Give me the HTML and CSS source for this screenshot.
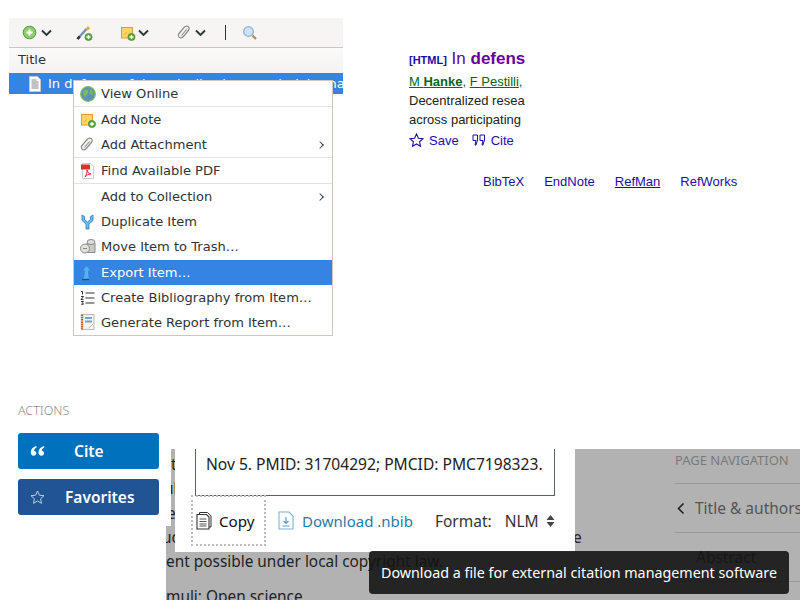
FILE: index.html
```html
<!DOCTYPE html>
<html lang="en">
<head>
<meta charset="utf-8">
<title>Citation collage</title>
<link rel="stylesheet" href="styles.css">
</head>
<body>
<svg class="defs" width="0" height="0" aria-hidden="true">
  <defs>
    <g id="plus-badge">
      <circle cx="0" cy="0" r="3.6" fill="#5aa83e" stroke="#3c7d2a" stroke-width=".6"/>
      <path d="M-2 0h4M0-2v4" stroke="#fff" stroke-width="1.3"/>
    </g>
    <g id="note">
      <rect x="1.5" y="2.5" width="11" height="10.5" fill="#fbd568" stroke="#e09a3e"/>
      <path d="M4 10l3-3M8 11l3-3" stroke="#e0a04a" stroke-width=".8"/>
    </g>
    <g id="clip">
      <path d="M2.500 12.500c-1.500-1.200-1.500-2.800-.5-4l5-6c1.400-1.600 3-1.800 4.200-.9 1.300 1 1.300 2.600.2 3.900l-5 6c-1 1.100-2.200 1.900-3.900 1z" fill="#f2f2f0" stroke="#8c8c88" stroke-width="1.200"/>
      <path d="M4.500 10.500l5-6" fill="none" stroke="#8c8c88" stroke-width="1.100"/>
    </g>
    <g id="chev">
      <path d="M1 1.500l4.500 4.500 4.500-4.500" fill="none" stroke="#2e3436" stroke-width="1.900"/>
    </g>
  </defs>
</svg>

<section class="pane zotero">
  <div class="z-toolbar">
    <svg class="z-ic i1" width="16" height="16" viewBox="0 0 16 16"><circle cx="7.500" cy="7.500" r="6.300" fill="#8fce6e" stroke="#4e9a33"/><path d="M4.500 7.500h6M7.500 4.500v6" stroke="#fff" stroke-width="2"/></svg>
    <svg class="z-chev c1" width="11" height="8" viewBox="0 0 11 8"><use href="#chev"/></svg>
    <svg class="z-ic i2" width="18" height="16" viewBox="0 0 18 16"><path d="M2.500 14l9-10" stroke="#7c93ad" stroke-width="2.600"/><path d="M2.500 14l2.200-2.500" stroke="#2f3133" stroke-width="2.600"/><path d="M13 .5l.8 2 2 .8-2 .8-.8 2-.8-2-2-.8 2-.8z" fill="#e8a020"/><use href="#plus-badge" x="13.500" y="12"/></svg>
    <svg class="z-ic i3" width="16" height="16" viewBox="0 0 16 16"><use href="#note"/><use href="#plus-badge" x="11.500" y="12"/></svg>
    <svg class="z-chev c2" width="11" height="8" viewBox="0 0 11 8"><use href="#chev"/></svg>
    <svg class="z-ic i4" width="15" height="15" viewBox="0 0 15 15"><use href="#clip"/></svg>
    <svg class="z-chev c3" width="11" height="8" viewBox="0 0 11 8"><use href="#chev"/></svg>
    <span class="z-sep"></span>
    <svg class="z-ic i5" width="16" height="16" viewBox="0 0 16 16"><circle cx="6.500" cy="6.500" r="4.800" fill="#cfe3f7" stroke="#8fb2d4" stroke-width="1.300"/><path d="M10.500 10.500l3.500 3.500" stroke="#b8875a" stroke-width="2.200"/></svg>
  </div>
  <div class="z-header">Title</div>
  <div class="z-row">
    <svg class="z-doc" width="14" height="16" viewBox="0 0 14 16"><path d="M1.500.5h8l3 3v12h-11z" fill="#fff" stroke="#c8c8c8"/><path d="M3.500 4h5M3.500 6h7M3.500 8h7M3.500 10h7M3.500 12h7" stroke="#777" stroke-width=".9"/></svg>
    <span class="z-title">In defense of decentralized research data management</span>
  </div>
</section>

<nav class="pane menu">
  <div class="m-item m-first"><span class="m-icon"><svg width="16" height="16" viewBox="0 0 16 16"><circle cx="8" cy="8" r="7.300" fill="#5b93b8" stroke="#7dbb5c" stroke-width="1.300"/><path d="M3 6c2-3 4-3 5-1s-1 3-2 5-3-1-3-4zM10 3c2 1 3 3 3 5l-2 1-1-3z" fill="#7db865"/></svg></span>View Online</div>
  <div class="m-sep"></div>
  <div class="m-item"><span class="m-icon"><svg width="16" height="16" viewBox="0 0 16 16"><use href="#note"/><use href="#plus-badge" x="12" y="12"/></svg></span>Add Note</div>
  <div class="m-item m-sub"><span class="m-icon"><svg width="15" height="15" viewBox="0 0 15 15"><use href="#clip"/></svg></span>Add Attachment<span class="m-arrow"></span></div>
  <div class="m-sep"></div>
  <div class="m-item"><span class="m-icon"><svg width="15" height="16" viewBox="0 0 15 16"><path d="M2.500.5h8l3 3v12h-11z" fill="#fff" stroke="#ccc"/><rect x="1" y="1.500" width="9" height="5" fill="#d8302a"/><path d="M5 14c2-3 2-5 2-7 1 3 2 4 4 4-3 0-4 1-6 3z" fill="none" stroke="#d8302a"/></svg></span>Find Available PDF</div>
  <div class="m-sep"></div>
  <div class="m-item m-sub"><span class="m-icon"></span>Add to Collection<span class="m-arrow"></span></div>
  <div class="m-item"><span class="m-icon"><svg width="15" height="16" viewBox="0 0 15 16"><path d="M2 1l2.500 1.500v3L7.500 8l3-2.500v-3L13 1v5.500L9 10v5H6v-5L2 6.500z" fill="#6cbcf0" stroke="#2b7cc0" stroke-width=".8"/></svg></span>Duplicate Item</div>
  <div class="m-item m-tall"><span class="m-icon"><svg width="16" height="16" viewBox="0 0 16 16"><path d="M7 5h8v9.500H7z" fill="#c9c9c6" stroke="#8a8a86"/><ellipse cx="11" cy="4" rx="4" ry="2.500" fill="#ddd" stroke="#8a8a86"/><circle cx="5" cy="10.500" r="4.500" fill="#e2e2df" stroke="#8a8a86"/><path d="M3 10.500h4" stroke="#888"/></svg></span>Move Item to Trash…</div>
  <div class="m-item m-active"><span class="m-icon"><svg width="12" height="16" viewBox="0 0 12 16"><path d="M6.500 1L10 5.500H8c0 3 .3 5.500 1 8.500H3c1.500-2.500 2-5.500 2-8.500H3z" fill="#52b4ee"/><path d="M2 14.500h7" stroke="#174f8c" stroke-width="1.400"/></svg></span>Export Item…</div>
  <div class="m-item"><span class="m-icon"><svg width="15" height="14" viewBox="0 0 15 14"><path d="M5.500 2h9M5.500 7h9M5.500 12h9" stroke="#333" stroke-width="1.200"/><path d="M1 .5h1.500v3M1 5.500h2.500L1 8.500h2.500M1 10.500h2.500l-1 1.200 1 1.500H1" fill="none" stroke="#333"/></svg></span>Create Bibliography from Item…</div>
  <div class="m-item m-last"><span class="m-icon"><svg width="15" height="16" viewBox="0 0 15 16"><rect x="2" y=".5" width="12" height="15" fill="#f5f3ea" stroke="#bbb"/><path d="M2 .5v15" stroke="#c65a2e" stroke-width="2.400" stroke-dasharray="1.500 .8"/><rect x="5" y="3" width="7" height="2" fill="#7a9fd0"/><rect x="5" y="6.500" width="7" height="2" fill="#7a9fd0"/><path d="M9 14l4-4" stroke="#bbb"/></svg></span>Generate Report from Item…</div>
</nav>

<section class="pane scholar">
  <div class="s-title"><span class="s-tag">[HTML]</span> <span class="s-link">In <b>defens</b></span></div>
  <div class="s-authors"><span class="s-u">M <b>Hanke</b></span>, <span class="s-u">F Pestilli</span>,</div>
  <div class="s-body">Decentralized resea</div>
  <div class="s-body">across participating</div>
  <div class="s-actions">
    <svg width="15" height="14" viewBox="0 0 15 14"><path d="M7.500 1l1.900 4.200 4.600.5-3.400 3.100.9 4.500-4-2.300-4 2.300.9-4.500L1 5.700l4.600-.5z" fill="none" stroke="#1a0dab" stroke-width="1.100"/></svg>
    <span class="s-act">Save</span>
    <svg class="s-q" width="14" height="12" viewBox="0 0 14 12"><path d="M1 1h4.500v5L4 11H3l1-4.500H1zM8 1h4.500v5L11 11h-1l1-4.500H8z" fill="none" stroke="#1a0dab"/></svg>
    <span class="s-act">Cite</span>
  </div>
</section>

<section class="pane exports">
  <span>BibTeX</span><span>EndNote</span><span class="s-under">RefMan</span><span>RefWorks</span>
</section>

<section class="pane actions">
  <div class="a-label">ACTIONS</div>
  <div class="a-btn a-cite"><svg class="a-ic" width="15" height="12" viewBox="0 0 15 12"><path d="M6.500 1C3 2 .8 4 .8 7.300c0 2 1.200 3.400 2.900 3.400 1.500 0 2.600-1.100 2.600-2.500S5.300 5.800 4 5.800c0-1.400 1-2.600 2.500-3.300zM14.200 1c-3.500 1-5.700 3-5.700 6.300 0 2 1.200 3.400 2.900 3.400 1.500 0 2.600-1.100 2.600-2.500S13 5.800 11.700 5.800c0-1.400 1-2.600 2.500-3.300z" fill="#fff"/></svg><span class="a-text">Cite</span></div>
  <div class="a-btn a-fav"><svg class="a-ic" width="15" height="14" viewBox="0 0 15 14"><path d="M7.500 1l1.900 4.200 4.600.5-3.400 3.100.9 4.500-4-2.300-4 2.300.9-4.500L1 5.700l4.600-.5z" fill="none" stroke="#cfdbe8" stroke-width=".9"/></svg><span class="a-text">Favorites</span></div>
</section>

<section class="pane dim">
  <div class="d-strip"></div>
  <div class="d-clip">
    <span class="d-f d-f1">t</span>
    <span class="d-f d-f2">ul</span>
    <span class="d-f d-f3">e</span>
  </div>
  <div class="d-l1">uc</div>
  <div class="d-l2">ent possible under local copyright law.</div>
  <div class="d-l3">muli: Open science</div>
  <span class="d-e">e</span>
  <aside class="d-nav">
    <div class="n-label">PAGE NAVIGATION</div>
    <div class="n-item n-back"><svg width="8" height="13" viewBox="0 0 8 13"><path d="M6.500 1.500l-5 5 5 5" fill="none" stroke="#222" stroke-width="1.600"/></svg>Title &amp; authors</div>
    <div class="n-item n-abs">Abstract</div>
    <div class="n-item"></div>
  </aside>
</section>

<section class="pane modal">
  <div class="c-box">Nov 5. PMID: 31704292; PMCID: PMC7198323.</div>
  <div class="c-bar">
    <div class="c-copy">
      <svg width="16" height="18" viewBox="0 0 16 18"><path d="M3.500 2.500v-2h8l3.500 3.500v11h-2" fill="none" stroke="#333"/><path d="M1 2.500h9.500l2.500 2.500v12H1z" fill="#fff" stroke="#333" stroke-width="1.100"/><path d="M3.500 7h7M3.500 9.500h7M3.500 12h7M3.500 14h7" stroke="#555" stroke-width="1.200"/></svg>
      <span>Copy</span>
    </div>
    <div class="c-dl">
      <svg width="16" height="19" viewBox="0 0 16 19"><path d="M1 1h10l4 4v13H1z" fill="#fff" stroke="#7fb2d0" stroke-width="1.100"/><path d="M8 6v6M5.500 10l2.500 2.500 2.500-2.500M4.500 15h7" fill="none" stroke="#5a9cc4" stroke-width="1.200"/></svg>
      <span>Download .nbib</span>
    </div>
    <div class="c-format">Format:</div>
    <div class="c-nlm">NLM<svg width="9" height="14" viewBox="0 0 9 14"><path d="M4.500 1L8.500 6h-8zM4.500 13L.5 8h8z" fill="#444"/></svg></div>
  </div>
</section>

<div class="tooltip">Download a file for external citation management software</div>
</body>
</html>
```

FILE: styles.css
```css
* { box-sizing: border-box; }
html, body { margin: 0; padding: 0; background: #fff; }
body { width: 800px; height: 600px; overflow: hidden; position: relative; }
.defs { position: absolute; }
.pane { position: absolute; }

/* Zotero pane */
.zotero { left: 9px; top: 18px; width: 334px; height: 76px; overflow: hidden; font-family: "DejaVu Sans", sans-serif; font-size: 13.050px; }
.z-toolbar { height: 30px; background: #f6f5f4; border-bottom: 1px solid #cdc7c2; display: flex; align-items: center; }
.z-toolbar svg { flex: none; }
.i1 { margin-left: 13px; }
.c1 { margin-left: 3px; }
.i2 { margin-left: 23px; }
.i3 { margin-left: 27px; }
.c2 { margin-left: 2px; }
.i4 { margin-left: 28px; }
.c3 { margin-left: 3px; }
.z-sep { width: 1px; height: 15px; background: #2e3436; margin-left: 19px; }
.i5 { margin-left: 16px; }
.z-header { height: 25px; background: linear-gradient(#fbfafa, #f4f3f2); color: #2e3436; padding-left: 9px; line-height: 24px; }
.z-row { height: 21px; background: #3584e4; color: #fff; display: flex; align-items: center; white-space: nowrap; }
.z-doc { margin-left: 19px; margin-right: 6px; flex: none; }

/* Context menu */
.menu { left: 73px; top: 80px; width: 260px; height: 256px; background: #fff; border: 1px solid #cdc7c2; font-family: "DejaVu Sans", sans-serif; font-size: 13.050px; color: #2e3436; }
.m-item { height: 25px; display: flex; align-items: center; padding-left: 6px; position: relative; white-space: nowrap; }
.m-tall { height: 26px; padding-bottom: 2px; }
.m-last { height: 24px; }
.m-icon { width: 21px; height: 16px; flex: none; display: flex; align-items: center; }
.m-sep { height: 1px; background: #e4e2df; }
.m-active { background: #3584e4; color: #fff; }
.m-arrow { position: absolute; right: 9px; top: 10px; width: 6px; height: 6px; border-top: 1.500px solid #2e3436; border-right: 1.500px solid #2e3436; transform: rotate(45deg) scale(.9); }

/* Scholar */
.scholar { left: 409px; top: 47px; width: 116px; overflow: hidden; white-space: nowrap; font-family: "Liberation Sans", Arial, sans-serif; font-size: 13px; color: #333; }
.s-title { height: 24px; line-height: 24px; font-size: 17px; color: #660099; }
.s-tag { font-size: 11px; font-weight: bold; color: #1a0dab; }
.s-authors { height: 20px; line-height: 22px; color: #006621; }
.s-u { text-decoration: underline; }
.s-body { height: 19px; line-height: 20px; color: #222; }
.s-actions { display: flex; align-items: center; height: 22px; color: #1a0dab; }
.s-act { margin-left: 5px; }
.s-q { margin-left: 13px; }
.exports { left: 483px; top: 174px; display: flex; gap: 20px; font-family: "Liberation Sans", Arial, sans-serif; font-size: 13px; color: #1a0dab; }
.s-under { text-decoration: underline; }

/* Actions */
.actions { left: 18px; top: 402px; width: 141px; font-family: "Noto Sans", sans-serif; }
.a-label { font-size: 12.500px; font-weight: 300; color: #8f8f8f; height: 31px; line-height: 17px; }
.a-btn { height: 36px; border-radius: 3px; color: #fff; font-weight: 600; font-size: 15.500px; display: flex; align-items: center; margin-bottom: 10px; position: relative; }
.a-cite { background: #0071bc; }
.a-fav { background: #205493; }
.a-ic { position: absolute; left: 12px; }
.a-cite .a-text { margin-left: 56px; }
.a-fav .a-text { margin-left: 47px; }

/* Dimmed page */
.dim { left: 166px; top: 449px; width: 634px; height: 151px; background: #b2b2b2; font-family: "Noto Sans", sans-serif; font-size: 15.400px; color: #222; overflow: hidden; }
.d-strip { position: absolute; left: 0; top: 0; width: 5px; height: 77px; background: #fff; }
.d-clip { position: absolute; left: 5px; top: 0; width: 4px; height: 77px; overflow: hidden; }
.d-f { position: absolute; left: 0; }
.d-f1 { top: 5px; }
.d-f2 { top: 29px; left: -7px; }
.d-f3 { top: 54px; left: -4px; }
.d-l1 { position: absolute; left: -4px; top: 78px; }
.d-l2 { position: absolute; left: 0; top: 102px; white-space: nowrap; }
.d-l3 { position: absolute; left: 0; top: 137px; white-space: nowrap; }
.d-e { position: absolute; left: 407px; top: 78px; }
.d-nav { position: absolute; left: 509px; top: 0; width: 125px; color: #555; white-space: nowrap; overflow: hidden; }
.n-label { font-size: 13px; height: 35px; line-height: 22px; color: #7a7a7a; border-bottom: 1px solid #999; }
.n-item { height: 49px; border-bottom: 1px solid #999; display: flex; align-items: center; gap: 10px; font-size: 15.500px; }
.n-item svg { flex: none; margin-left: 2px; }
.n-abs { padding-left: 21px; color: #3a3a3a; }

/* Citation modal */
.modal { left: 175px; top: 449px; width: 400px; height: 103px; background: #fff; font-family: "Noto Sans", sans-serif; font-size: 15.600px; color: #212121; }
.c-box { margin-left: 20px; width: 360px; height: 47px; border: 1px solid #5b616b; border-top: 0; padding: 3px 10px; white-space: nowrap; line-height: 24px; }
.c-bar { display: flex; align-items: center; height: 51px; margin-left: 16px; margin-top: -1px; }
.c-copy { width: 75px; height: 51px; border: 2px dotted #bbbcc0; display: flex; align-items: center; padding-left: 3px; gap: 7px; color: #111; font-size: 15.200px; }
.c-dl { display: flex; align-items: center; gap: 8px; margin-left: 12px; color: #1f7ba8; font-size: 15px; }
.c-format { margin-left: 22px; color: #333; font-size: 15.500px; }
.c-nlm { margin-left: 13px; display: flex; align-items: center; gap: 7px; color: #333; font-size: 15.500px; }

/* Tooltip */
.tooltip { position: absolute; left: 369px; top: 551px; width: 420px; height: 43px; background: rgba(20, 20, 20, .9); border-radius: 4px; color: #fff; font-family: "Noto Sans", sans-serif; font-size: 14.300px; line-height: 43px; text-align: center; white-space: nowrap; }
```
